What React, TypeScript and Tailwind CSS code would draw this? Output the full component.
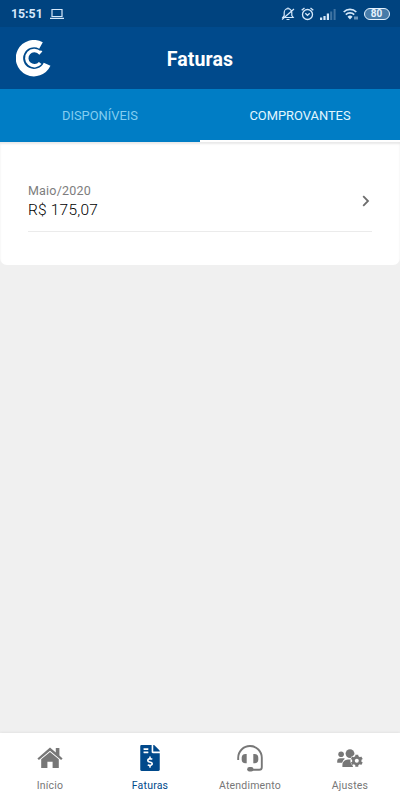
import type { ReactNode } from 'react';
import { FaFileInvoiceDollar } from 'react-icons/fa';

function StatusBar() {
  return (
    <div className="flex h-[27px] items-center justify-between bg-[#00437f] pl-[11px] pr-[10px] pt-px text-[#d5e8fa]">
      <div className="flex items-center gap-[7px]">
        <span className="w-[32px] whitespace-nowrap text-[12.3px] font-bold leading-none">15:51</span>
        <svg width="14" height="12" viewBox="0 0 14 12" fill="none" stroke="currentColor" strokeWidth="1.2">
          <path d="M2 1.5h10v7H2zM0 10.4h14" />
        </svg>
      </div>
      <div className="flex items-center">
        <svg className="mr-[6px]" width="14" height="14" viewBox="0 0 14 14" fill="none" stroke="currentColor" strokeWidth="1.2">
          <path d="M1.8 10.5h10.4L10.8 8.5V5.5a3.8 3.8 0 0 0-7.6 0v3zM7 .5v1.5M5.5 12.5h3M1 12.5L13 2" />
        </svg>
        <svg className="mr-[6px]" width="13" height="14" viewBox="0 0 13 14" fill="none" stroke="currentColor" strokeWidth="1.3">
          <circle cx="6.5" cy="7.5" r="5" />
          <path d="M.7 3.3L3.5 1M12.3 3.3L9.5 1M4.3 6.3l2.2 2 2.2-2" />
        </svg>
        <svg className="mr-[7px]" width="16" height="12" viewBox="0 0 16 12" fill="currentColor">
          <path d="M0 9.5h2.2V12H0zM3.4 8h2.2v4H3.4zM6.8 5.5H9V12H6.8z" />
          <path d="M10.2 3.5h2V12h-2zM13.6 1h2v11h-2z" opacity=".3" />
        </svg>
        <svg className="mr-[6px]" width="15" height="12" viewBox="0 0 15 12" fill="none" stroke="currentColor" strokeWidth="1.7">
          <path d="M.7 4a9 9 0 0 1 12.6 0M2.8 6.6a6 6 0 0 1 8.4 0" />
          <path d="M4.5 8.7a3.5 3.5 0 0 1 5 0L7 11.5z" fill="currentColor" stroke="none" />
          <path d="M12 8.5v3M14 8.5v3" strokeWidth="1" />
        </svg>
        <span className="flex h-[12px] w-[26px] items-center justify-center rounded-full border border-current bg-[#477ba9] text-[10px] font-bold leading-none text-[#e6f3ff]">
          <span className="pr-px">80</span>
        </span>
      </div>
    </div>
  );
}

function Logo() {
  return (
    <svg width="35" height="37" viewBox="0 0 35 37" fill="none" stroke="#fff">
      <path d="M25 5.5A14.5 14.5 0 1 0 31.1 24.3" strokeWidth="7.4" />
      <path d="M23.6 12.6A7.6 7.6 0 1 0 24.2 23" strokeWidth="3.4" />
      <path d="M22.6 14.2l3-3.4" strokeWidth="2" />
    </svg>
  );
}

function HomeIcon() {
  return (
    <svg width="26" height="22" viewBox="0 0 26 22" fill="currentColor">
      <path d="M13 .6L.4 11.4l1.5 1.7L13 3.7l11.1 9.4 1.5-1.7-3.2-2.8V1h-3.6v4.5z" />
      <path d="M13 4.9L4.2 12.3V21h6.2v-6.2h5.2V21h6.2v-8.7z" />
    </svg>
  );
}

function HeadsetIcon() {
  return (
    <svg width="26" height="27" viewBox="0 0 26 27" fill="none">
      <path
        d="M1.2 15v-2.2a11.8 11.8 0 0 1 23.6 0v9.4a2.6 2.6 0 0 1-2.6 2.6H13"
        stroke="currentColor"
        strokeWidth="1.9"
      />
      <path d="M9.7 9v9.3H8.5A3.8 3.8 0 0 1 4.7 14.5v-1.7A3.8 3.8 0 0 1 8.5 9z" fill="currentColor" />
      <path d="M16.3 9v9.3h1.2a3.8 3.8 0 0 0 3.8-3.8v-1.7A3.8 3.8 0 0 0 17.5 9z" fill="currentColor" />
      <rect x="10.2" y="22" width="6.3" height="4.4" rx="2.2" fill="currentColor" />
    </svg>
  );
}

function PeopleGearIcon() {
  return (
    <svg width="26" height="19" viewBox="0 0 26 19" fill="currentColor">
      <circle cx="4.1" cy="5.2" r="2.8" />
      <circle cx="13" cy="4.6" r="4.4" />
      <path d="M.2 13.8v-1.6A2.9 2.9 0 0 1 3.1 9.3h3.3c.5 0 1 .1 1.4.4a7.2 7.2 0 0 0-2.6 4.1z" />
      <path d="M5.4 18v-2.1a5.5 5.5 0 0 1 5.5-5.5h5v7.6z" />
      <circle cx="19.8" cy="11.8" r="6.4" fill="#fff" />
      <path
        d="M19.8 5.8v12M14.6 8.8l10.4 6M14.6 14.8l10.4-6"
        fill="none"
        stroke="currentColor"
        strokeWidth="3"
      />
      <circle cx="19.8" cy="11.8" r="4.7" />
      <circle cx="19.8" cy="11.8" r="2" fill="#fff" />
    </svg>
  );
}

function NavItem({ label, icon, active = false }: { label: string; icon: ReactNode; active?: boolean }) {
  return (
    <div className={`flex flex-1 flex-col items-center ${active ? 'text-[#00498b]' : 'text-[#777777]'}`}>
      <div className="flex h-[46px] items-center pt-[4px]">{icon}</div>
      <span className="whitespace-nowrap text-[10.5px] leading-[14px] tracking-[0.2px]">{label}</span>
    </div>
  );
}

export default function App() {
  return (
    <div className="flex h-[800px] w-[400px] flex-col overflow-hidden bg-[#f0f0f0] font-['Roboto',sans-serif]">
      <StatusBar />
      <header className="grid h-[62px] grid-cols-[50px_1fr_50px] items-center bg-[#004a8c]">
        <div className="pl-[16px]">
          <Logo />
        </div>
        <h1 className="pt-[3px] text-center text-[19.5px] font-bold tracking-[0.1px] text-white">Faturas</h1>
      </header>
      <div className="grid h-[53px] shrink-0 grid-cols-2 bg-[#007dc5] text-[12.9px]">
        <div className="flex items-center justify-center pt-px text-[#84cdf0]">DISPONÍVEIS</div>
        <div className="flex items-center justify-center border-b-2 border-white pt-[3px] text-[#e2f7ff]">COMPROVANTES</div>
      </div>
      <main className="flex-1">
        <section className="h-[123px] rounded-b-[7px] bg-white px-[28px] pt-[40px] shadow-[inset_0_2px_2px_#e9e9e9]">
          <div className="flex h-[50px] items-start justify-between border-b border-[#ebebeb]">
            <div>
              <p className="text-[12.5px] leading-[17px] tracking-[0.2px] text-[#7d7d7d]">Maio/2020</p>
              <p className="pt-[2px] text-[15.5px] font-light leading-[19px] tracking-[0.2px] text-black">R$ 175,07</p>
            </div>
            <svg className="mr-[2px] mt-[13px]" width="8" height="12" viewBox="0 0 8 12" fill="none" stroke="#6d6d6d" strokeWidth="1.8">
              <path d="M1.2 1.2L6 6l-4.8 4.8" />
            </svg>
          </div>
        </section>
      </main>
      <nav className="flex h-[67px] bg-white shadow-[0_-1px_2px_#e4e4e4]">
        <NavItem label="Início" icon={<HomeIcon />} />
        <NavItem label="Faturas" icon={<FaFileInvoiceDollar size={26} />} active />
        <NavItem label="Atendimento" icon={<HeadsetIcon />} />
        <NavItem label="Ajustes" icon={<PeopleGearIcon />} />
      </nav>
    </div>
  );
}
